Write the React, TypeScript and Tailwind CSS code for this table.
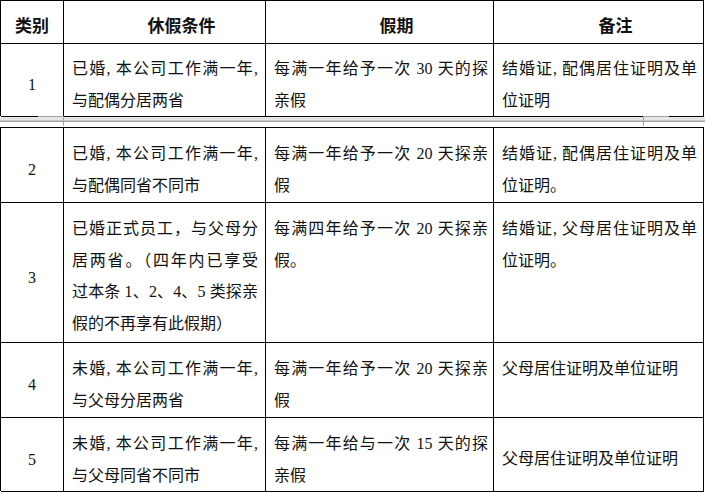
type Row = {
    n: string;
    h: string;
    c2: string[];
    c3: string[];
    c4: string[];
    c4Center?: boolean;
};

const firstRows: Row[] = [
    {
        n: '1',
        h: 'h-[73px]',
        c2: ['已婚, 本公司工作满一年,', '与配偶分居两省'],
        c3: ['每满一年给予一次 30 天的探', '亲假'],
        c4: ['结婚证, 配偶居住证明及单', '位证明'],
    },
];

const restRows: Row[] = [
    {
        n: '2',
        h: 'h-[75px]',
        c2: ['已婚, 本公司工作满一年,', '与配偶同省不同市'],
        c3: ['每满一年给予一次 20 天探亲', '假'],
        c4: ['结婚证, 配偶居住证明及单', '位证明。'],
    },
    {
        n: '3',
        h: 'h-[140px]',
        c2: ['已婚正式员工，与父母分', '居两省。（四年内已享受', '过本条 1、2、4、5 类探亲', '假的不再享有此假期）'],
        c3: ['每满四年给予一次 20 天探亲', '假。'],
        c4: ['结婚证, 父母居住证明及单', '位证明。'],
    },
    {
        n: '4',
        h: 'h-[75px]',
        c2: ['未婚, 本公司工作满一年,', '与父母分居两省'],
        c3: ['每满一年给予一次 20 天探亲', '假'],
        c4: ['父母居住证明及单位证明'],
    },
    {
        n: '5',
        h: 'h-[73px]',
        c2: ['未婚, 本公司工作满一年,', '与父母同省不同市'],
        c3: ['每满一年给与一次 15 天的探', '亲假'],
        c4: ['父母居住证明及单位证明'],
        c4Center: true,
    },
];

function Lines({ lines }: { lines: string[] }) {
    return (
        <>
            {lines.map((line, i) => (
                <div
                    key={i}
                    className={
                        i < lines.length - 1
                            ? 'whitespace-nowrap text-justify [text-align-last:justify]'
                            : 'whitespace-nowrap'
                    }
                >
                    {line}
                </div>
            ))}
        </>
    );
}

function BodyRow({ row }: { row: Row }) {
    const cell = 'border-r border-b border-black';
    return (
        <div className={`grid grid-cols-[63px_202px_228px_210px] ${row.h}`}>
            <div className={`${cell} flex items-center justify-center pt-[10px]`}>{row.n}</div>
            <div className={`${cell} pl-[8px] pr-[7px] pt-[10px]`}>
                <Lines lines={row.c2} />
            </div>
            <div className={`${cell} pl-[8px] pr-[5px] pt-[10px]`}>
                <Lines lines={row.c3} />
            </div>
            {row.c4Center ? (
                <div className={`${cell} flex items-center pl-[8px] pr-[6px] pt-[9px]`}>
                    <Lines lines={row.c4} />
                </div>
            ) : (
                <div className={`${cell} pl-[8px] pr-[6px] pt-[10px]`}>
                    <Lines lines={row.c4} />
                </div>
            )}
        </div>
    );
}

export default function App() {
    const head = 'border-r border-b border-black flex items-center justify-center pt-[10px] font-bold text-[17px]';
    return (
        <div className="w-[705px] h-[492px] overflow-hidden bg-white text-[16px] leading-[31.5px] text-[#111] font-['Liberation_Serif','Noto_Sans_CJK_SC',serif]">
            {/* first page part */}
            <div className="w-[704px] border-l border-t border-black">
                <div className="grid grid-cols-[63px_202px_228px_210px] h-[42px]">
                    <div className={head}>类别</div>
                    <div className={`${head} pl-[34px]`}>休假条件</div>
                    <div className={`${head} pl-[34px]`}>假期</div>
                    <div className={`${head} pl-[34px]`}>备注</div>
                </div>
                {firstRows.map((r) => (
                    <BodyRow key={r.n} row={r} />
                ))}
            </div>

            {/* page break between the two parts */}
            <div className="relative h-[11px]">
                <div className="h-px" />
                <div className="h-[3px] bg-[#e6e6e6]" />
                <div className="h-px bg-[#c8c8c8]" />
                <div className="h-px bg-[#a0a0a0]" />
                <div className="absolute left-[38px] top-0 h-px w-[26px] bg-[#a3a3a3]" />
                <div className="absolute left-[63px] top-0 h-[10px] w-px bg-[#a3a3a3]" />
                <div className="absolute left-[643px] top-0 h-px w-[26px] bg-[#a3a3a3]" />
                <div className="absolute left-[643px] top-0 h-[10px] w-px bg-[#a3a3a3]" />
            </div>

            {/* second page part */}
            <div className="w-[704px] border-l border-t border-black">
                {restRows.map((r) => (
                    <BodyRow key={r.n} row={r} />
                ))}
            </div>
        </div>
    );
}
